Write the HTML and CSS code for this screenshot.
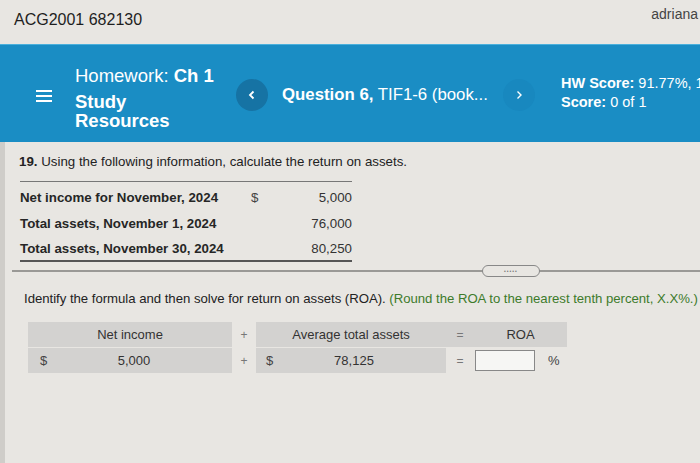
FILE: index.html
```html
<!DOCTYPE html>
<html>
<head>
<meta charset="utf-8">
<link rel="stylesheet" href="styles.css">
</head>
<body>
<div class="page">
  <div class="topbar">
    <span class="course">ACG2001 682130</span>
    <span class="user">adriana</span>
  </div>
  <div class="header">
    <svg class="menu" width="16" height="14" viewBox="0 0 16 14"><rect x="0" y="1" width="16" height="2" fill="#fff"/><rect x="0" y="6" width="16" height="2" fill="#fff"/><rect x="0" y="11" width="16" height="2" fill="#fff"/></svg>
    <div class="title">
      <div class="hw">Homework: <b>Ch 1</b></div>
      <div class="study">Study<br>Resources</div>
    </div>
    <div class="nav prev"><svg width="8" height="10" viewBox="0 0 8 10"><path d="M5.5 1.5 L2 5 L5.5 8.5" stroke="#fff" stroke-width="1.8" fill="none"/></svg></div>
    <div class="qtitle"><b>Question 6,</b> TIF1-6 (book...</div>
    <div class="nav next"><svg width="8" height="10" viewBox="0 0 8 10"><path d="M2.5 1.5 L6 5 L2.5 8.5" stroke="#fff" stroke-width="1.4" fill="none"/></svg></div>
    <div class="score">
      <div><b>HW Score:</b> 91.77%, 11.01 of 12 points</div>
      <div><b>Score:</b> 0 of 1</div>
    </div>
  </div>
  <div class="main">
    <div class="content">
      <p class="question"><b>19.</b> Using the following information, calculate the return on assets.</p>
      <div class="data">
        <div class="label">Net income for November, 2024</div><div class="cur">$</div><div class="val">5,000</div>
        <div class="label">Total assets, November 1, 2024</div><div class="cur"></div><div class="val">76,000</div>
        <div class="label">Total assets, November 30, 2024</div><div class="cur"></div><div class="val">80,250</div>
      </div>
      <div class="divider"><span class="pill">•••••</span></div>
      <p class="instr">Identify the formula and then solve for return on assets (ROA). <span class="green">(Round the ROA to the nearest tenth percent, X.X%.)</span></p>
      <div class="formula">
        <div class="cell grey">Net income</div>
        <div class="cell op">+</div>
        <div class="cell grey">Average total assets</div>
        <div class="cell grey op">=</div>
        <div class="cell grey">ROA</div>

        <div class="cell grey money"><span class="dollar">$</span><span class="amt">5,000</span></div>
        <div class="cell op">+</div>
        <div class="cell grey money m2"><span class="dollar">$</span><span class="amt">78,125</span></div>
        <div class="cell op">=</div>
        <div class="cell answer"><span class="box"></span><span class="pct">%</span></div>
      </div>
    </div>
  </div>
</div>
</body>
</html>
```
FILE: styles.css
```css
html, body {
  margin: 0;
  padding: 0;
}
body {
  background: #e8e6e2;
  font-family: "Liberation Sans", Arial, sans-serif;
  color: #222;
  overflow: hidden;
}
.page {
  width: 700px;
  height: 463px;
  overflow: hidden;
}
.topbar {
  height: 44px;
  display: flex;
  justify-content: space-between;
  align-items: flex-start;
  padding-left: 14px;
  box-sizing: border-box;
}
.course {
  font-size: 16px;
  margin-top: 11px;
  color: #1e1e1e;
}
.user {
  font-size: 14px;
  margin-top: 6px;
  margin-right: 2px;
  color: #444;
}
.header {
  height: 98px;
  background: #1a8dc4;
  border-top: 1px solid #4ab0dc;
  box-sizing: border-box;
  display: flex;
  align-items: center;
  color: #fff;
  white-space: nowrap;
}
.header > * {
  flex-shrink: 0;
}
.menu {
  margin-left: 36px;
  margin-top: 4px;
}
.title {
  margin-left: 23px;
  width: 153px;
  font-size: 18.5px;
  margin-top: 8px;
}
.hw {
  line-height: 20px;
  margin-bottom: 6px;
}
.study {
  font-weight: bold;
  line-height: 19px;
}
.nav {
  width: 32px;
  height: 32px;
  border-radius: 50%;
  display: flex;
  align-items: center;
  justify-content: center;
  margin-top: 2px;
}
.prev {
  background: #1673a4;
  margin-left: 8px;
}
.next {
  background: #1888bf;
  margin-left: 14px;
}
.qtitle {
  margin-left: 14px;
  font-size: 16.8px;
  width: 207px;
  margin-top: 2px;
}
.score {
  margin-left: 26px;
  font-size: 14.5px;
  line-height: 19px;
  margin-top: -1px;
}
.main {
  height: 321px;
  border-left: 5px solid #cfcdc9;
  box-sizing: border-box;
}
.content {
  padding-left: 14px;
}
.question {
  margin: 0;
  padding-top: 12px;
  font-size: 13.3px;
  line-height: 16px;
}
.data {
  margin-top: 11px;
  width: 332px;
  display: grid;
  grid-template-columns: 231px 20px 81px;
  grid-template-rows: 26px 26px 24px;
  align-items: center;
  border-top: 1px solid #777;
  border-bottom: 2px solid #555;
  padding-top: 2px;
  font-size: 13.3px;
  margin-left: 1px;
}
.label {
  font-weight: bold;
  color: #262626;
}
.cur {
  color: #444;
}
.val {
  text-align: right;
  color: #333;
}
.divider {
  margin-top: 8px;
  margin-left: -7px;
  height: 0;
  border-top: 2px solid #9a9996;
  position: relative;
}
.pill {
  position: absolute;
  left: 470px;
  top: -7px;
  width: 56px;
  height: 10px;
  border: 1.5px solid #888;
  border-radius: 6px;
  background: #e8e6e2;
  font-size: 5px;
  line-height: 10px;
  text-align: center;
  color: #777;
  letter-spacing: 1px;
}
.instr {
  margin: 0;
  padding-top: 19px;
  margin-left: 5px;
  font-size: 13.2px;
  letter-spacing: -0.03px;
  line-height: 16px;
  color: #222;
  white-space: nowrap;
}
.green {
  color: #3d7b2b;
}
.formula {
  margin-top: 15px;
  margin-left: 9px;
  display: grid;
  grid-template-columns: 204px 24px 190px 28px 93px;
  grid-template-rows: 25px 25px;
  row-gap: 1px;
  font-size: 13px;
  color: #333;
}
.cell {
  display: flex;
  align-items: center;
  justify-content: center;
}
.grey {
  background: #d3d2d0;
}
.op {
  color: #777;
  font-size: 12px;
}
.money {
  justify-content: flex-start;
  padding: 0 12px;
}
.m2 {
  padding-left: 10px;
}
.dollar {
  width: 8px;
  color: #444;
}
.amt {
  flex: 1;
  text-align: center;
}
.answer {
  justify-content: flex-start;
  padding-left: 1px;
}
.box {
  width: 58px;
  height: 19px;
  background: #f6f6f4;
  border: 1px solid #888;
}
.pct {
  margin-left: 13px;
  color: #444;
}
```
